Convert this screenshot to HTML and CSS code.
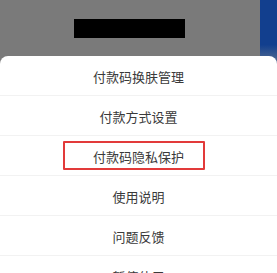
FILE: index.html
```html
<!DOCTYPE html>
<html>

<head>
    <title>付款码设置</title>
    <link rel="stylesheet" href="styles.css">
</head>

<body>
    <div class="screen">
        <div class="topbar">
            <div class="masked"></div>
            <div class="edge"></div>
        </div>
        <div class="sheet">
            <ul class="menu">
                <li>付款码换肤管理</li>
                <li>付款方式设置</li>
                <li class="marked">付款码隐私保护</li>
                <li>使用说明</li>
                <li>问题反馈</li>
                <li>暂停使用</li>
            </ul>
        </div>
    </div>
</body>

</html>
```

FILE: styles.css
```css
body {
    margin: 0;
    padding: 0;
    font-family: "Noto Sans CJK SC", "Noto Sans", sans-serif;
    overflow: hidden;
}

.screen {
    width: 277px;
    height: 273px;
    background-color: #7a7a7a;
    overflow: hidden;
}

.topbar {
    height: 64px;
    display: flex;
    margin-bottom: -8px;
}

.masked {
    width: 111px;
    height: 19px;
    margin: 19px 0 0 74px;
    background-color: #000;
}

.edge {
    margin-left: auto;
    width: 17px;
    background: linear-gradient(#123f8e 0, #123f8e 70%, #5a6f90 100%);
}

.sheet {
    position: relative;
    background-color: #fff;
    border-radius: 8px 8px 0 0;
}

.menu {
    margin: 0;
    padding: 0;
}

.menu li {
    list-style-type: none;
    height: 37px;
    padding-top: 2px;
    line-height: 37px;
    border-bottom: 1px solid #f2f2f2;
    text-align: center;
    font-size: 13px;
    color: #3a3a3a;
    position: relative;
}

.marked::after {
    content: "";
    position: absolute;
    left: 63px;
    top: 5px;
    width: 138px;
    height: 25px;
    border: 2px solid #e23a3a;
    border-radius: 1px;
}
```
